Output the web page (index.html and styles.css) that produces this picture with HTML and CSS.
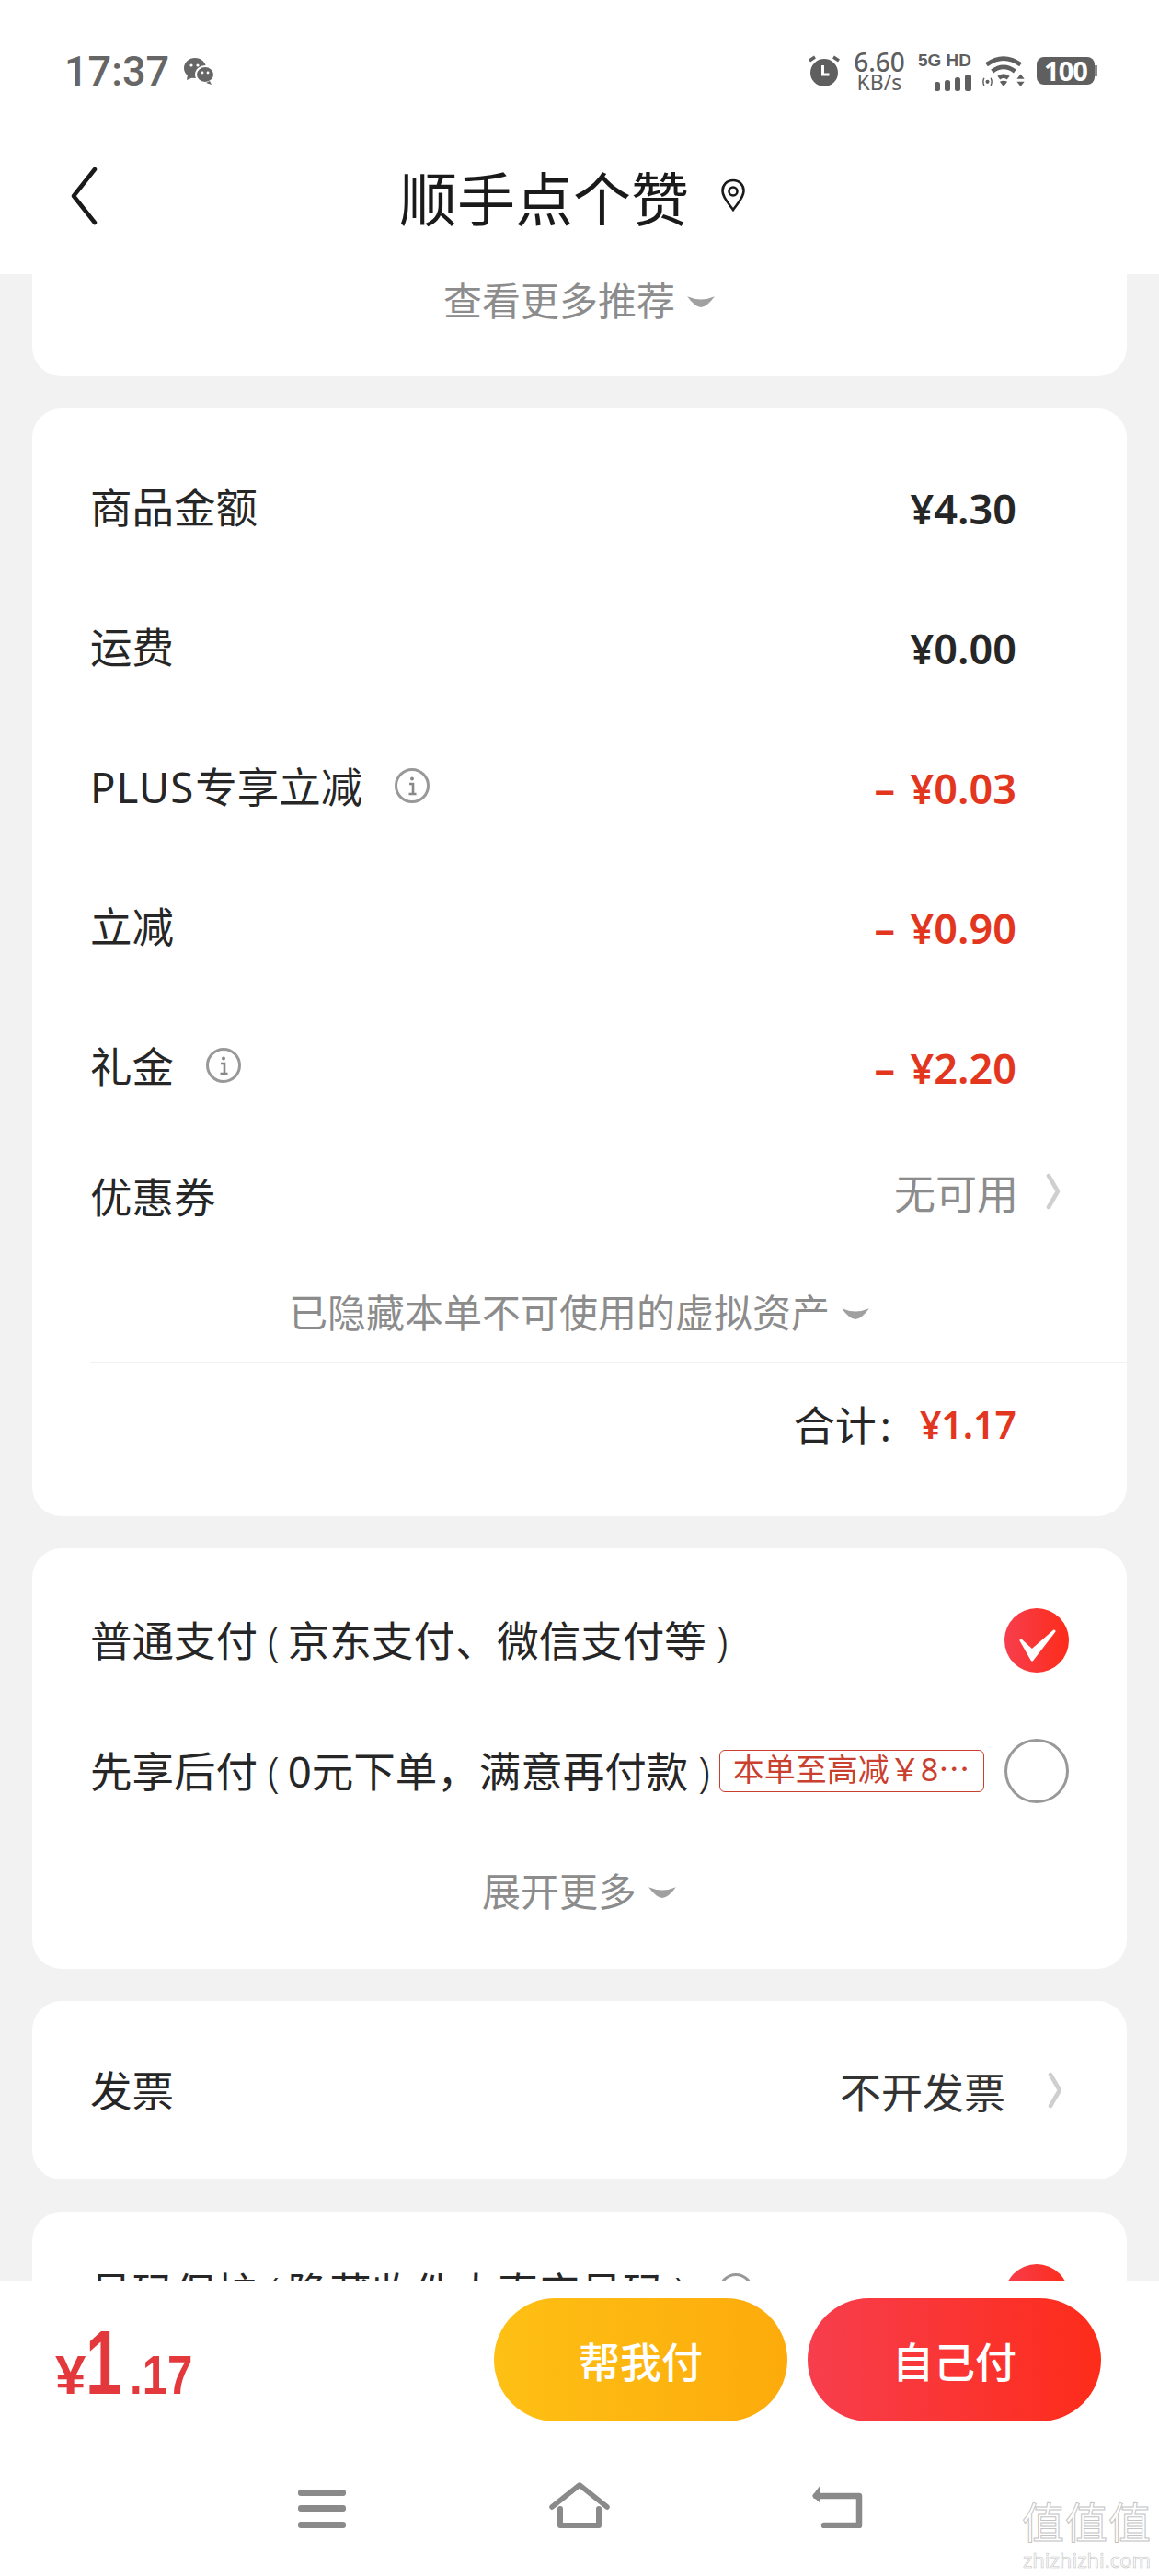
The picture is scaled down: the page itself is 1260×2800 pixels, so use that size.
FILE: index.html
```html
<!DOCTYPE html>
<html lang="zh-CN">
<head>
    <meta charset="UTF-8">
    <meta name="viewport" content="width=device-width, initial-scale=1.0">
    <title>订单结算</title>
    <link rel="stylesheet" href="styles.css">
</head>
<body>
    <svg class="defs" width="0" height="0">
        <symbol id="info" viewBox="0 0 40 40">
            <circle cx="20" cy="20" r="17.5" fill="none" stroke="#999" stroke-width="3"/>
            <circle cx="20" cy="12.5" r="2" fill="#888"/>
            <path d="M17 18h4v11M16.5 29h8" fill="none" stroke="#888" stroke-width="2.6"/>
        </symbol>
        <symbol id="down" viewBox="0 0 30 16">
            <path d="M1 3Q15 9 29 3Q21 14 15 14Q9 14 1 3Z" fill="#a0a0a0"/>
        </symbol>
        <symbol id="right" viewBox="0 0 16 40">
            <path d="M3 3l10 17l-10 17" fill="none" stroke="#cfcfcf" stroke-width="4.5" stroke-linecap="round" stroke-linejoin="round"/>
        </symbol>
    </svg>

    <div class="page">
        <header class="top">
            <div class="status">
                <div class="status-left">
                    <span class="time">17:37</span>
                    <svg class="wechat" viewBox="0 0 34 30">
                        <ellipse cx="13" cy="12" rx="12" ry="11" fill="#666"/>
                        <path d="M5 19l-1 6l7-3z" fill="#666"/>
                        <ellipse cx="24" cy="19" rx="10" ry="9" fill="#666" stroke="#fff" stroke-width="2"/>
                        <path d="M29 26l2 4l-6-2z" fill="#666"/>
                        <circle cx="9" cy="9" r="1.6" fill="#fff"/>
                        <circle cx="16" cy="9" r="1.6" fill="#fff"/>
                        <circle cx="21" cy="17" r="1.4" fill="#fff"/>
                        <circle cx="27" cy="17" r="1.4" fill="#fff"/>
                    </svg>
                </div>
                <div class="status-right">
                    <svg class="alarm" viewBox="0 0 34 34">
                        <circle cx="17" cy="19" r="15" fill="#5f5f5f"/>
                        <path d="M1 6l6-4M33 6l-6-4" stroke="#5f5f5f" stroke-width="3.4" fill="none"/>
                        <path d="M15.5 11v10h7" stroke="#fff" stroke-width="3" fill="none"/>
                    </svg>
                    <div class="speed"><span>6.60</span><span class="speed-unit">KB/s</span></div>
                    <div class="net">
                        <span class="net-label">5G HD</span>
                        <svg class="bars" viewBox="0 0 40 18">
                            <rect x="0" y="8" width="6" height="10" rx="2.5" fill="#5f5f5f"/>
                            <rect x="11" y="6" width="6" height="12" rx="2.5" fill="#5f5f5f"/>
                            <rect x="22" y="3" width="6" height="15" rx="2.5" fill="#5f5f5f"/>
                            <rect x="33" y="0" width="7" height="18" rx="2.5" fill="#5f5f5f"/>
                        </svg>
                    </div>
                    <svg class="wifi" viewBox="0 0 44 34">
                        <path d="M4 10q18-13 36 0M10 17q12-9 24 0M17 24q5-4 10 0" fill="none" stroke="#5f5f5f" stroke-width="4.6"/>
                        <path d="M22 33l-4-5q4-2 8 0z" fill="#5f5f5f"/>
                        <circle cx="5" cy="28" r="2" fill="#5f5f5f"/>
                        <path d="M1.500 24q-2 4 0 8M8.500 24q2 4 0 8" stroke="#5f5f5f" stroke-width="1.4" fill="none"/>
                        <path d="M40 20l4 5h-8zM36 28h8l-4 5z" fill="#5f5f5f"/>
                    </svg>
                    <div class="battery"><span class="battery-num">100</span><i class="battery-tip"></i></div>
                </div>
            </div>
            <div class="nav">
                <svg class="back" viewBox="0 0 30 64">
                    <path d="M27 3L4 32l23 29" fill="none" stroke="#1a1a1a" stroke-width="4.500" stroke-linecap="round" stroke-linejoin="round"/>
                </svg>
                <h1 class="shop">顺手点个赞</h1>
                <svg class="pin" viewBox="0 0 28 36">
                    <path d="M14 2C7 2 2.500 7 2.500 13.500C2.500 21 10 28 14 34C18 28 25.500 21 25.500 13.500C25.500 7 21 2 14 2Z" fill="none" stroke="#1a1a1a" stroke-width="2.600"/>
                    <circle cx="14" cy="14" r="4.500" fill="none" stroke="#1a1a1a" stroke-width="2.600"/>
                </svg>
            </div>
        </header>

        <main class="content">
            <section class="card card-first">
                <div class="more more-top">查看更多推荐<svg class="down"><use href="#down"/></svg></div>
            </section>

            <section class="card card-price">
                <div class="row"><span class="label">商品金额</span><span class="value">¥4.30</span></div>
                <div class="row"><span class="label">运费</span><span class="value">¥0.00</span></div>
                <div class="row"><span class="label"><span class="plus">PLUS</span>专享立减<svg class="info"><use href="#info"/></svg></span><span class="value value-red">– ¥0.03</span></div>
                <div class="row"><span class="label">立减</span><span class="value value-red">– ¥0.90</span></div>
                <div class="row"><span class="label">礼金<svg class="info"><use href="#info"/></svg></span><span class="value value-red">– ¥2.20</span></div>
                <div class="row row-coupon">
                    <span class="label">优惠券</span>
                    <span class="link-value">无可用<svg class="right"><use href="#right"/></svg></span>
                </div>
                <div class="more more-hidden">已隐藏本单不可使用的虚拟资产<svg class="down"><use href="#down"/></svg></div>
                <div class="total"><span class="total-label">合计<span class="colon">:</span></span><span class="total-num">¥1.17</span></div>
            </section>

            <section class="card card-pay">
                <div class="pay-row">
                    <span class="label">普通支付 <span class="paren-l">(</span>京东支付、微信支付等<span class="paren-r">)</span></span>
                    <svg class="radio" viewBox="0 0 70 70">
                        <defs>
                            <linearGradient id="redBtn" x1="0" x2="1" y1="0" y2="0">
                                <stop offset="0" stop-color="#f73e4d"/>
                                <stop offset="1" stop-color="#fd2c1a"/>
                            </linearGradient>
                        </defs>
                        <circle cx="35" cy="35" r="35" fill="url(#redBtn)"/>
                        <path d="M18 35l12 11l24-21l-24 31z" fill="#fff" stroke="#fff" stroke-width="3" stroke-linejoin="round"/>
                    </svg>
                </div>
                <div class="pay-row">
                    <span class="label">先享后付 <span class="paren-l">(</span>0元下单，满意再付款<span class="paren-r">)</span></span>
                    <span class="tag">本单至高减￥8⋯</span>
                    <i class="radio-off"></i>
                </div>
                <div class="more more-pay">展开更多<svg class="down"><use href="#down"/></svg></div>
            </section>

            <section class="card card-invoice">
                <span class="label">发票</span>
                <span class="link-value link-dark">不开发票<svg class="right"><use href="#right"/></svg></span>
            </section>

            <section class="card card-phone">
                <span class="label">号码保护 <span class="paren-l">(</span>隐藏收件人真实号码<span class="paren-r">)</span><svg class="info"><use href="#info"/></svg></span>
                <svg class="radio" viewBox="0 0 70 70"><circle cx="35" cy="35" r="35" fill="url(#redBtn)"/></svg>
            </section>
        </main>

        <footer class="bottom">
            <div class="pay-bar">
                <div class="price"><span class="price-sign">¥</span><span class="price-int">1</span><span class="price-dec">.17</span></div>
                <div class="btns">
                    <div class="btn btn-yellow">帮我付</div>
                    <div class="btn btn-red">自己付</div>
                </div>
            </div>
            <div class="sys-nav">
                <svg class="sys-menu" viewBox="0 0 52 42">
                    <rect width="52" height="7" rx="3" fill="#8a8a8a"/>
                    <rect y="17" width="52" height="7" rx="3" fill="#8a8a8a"/>
                    <rect y="35" width="52" height="7" rx="3" fill="#8a8a8a"/>
                </svg>
                <svg class="sys-home" viewBox="0 0 66 50">
                    <path d="M3 27L33 3l30 24" fill="none" stroke="#8a8a8a" stroke-width="5.500" stroke-linecap="round" stroke-linejoin="round"/>
                    <path d="M12 29v18h42V29" fill="none" stroke="#8a8a8a" stroke-width="6" stroke-linecap="round" stroke-linejoin="round"/>
                </svg>
                <svg class="sys-back" viewBox="0 0 56 48">
                    <path d="M5 13h47v32H14" fill="none" stroke="#8a8a8a" stroke-width="6.500" stroke-linecap="round" stroke-linejoin="round"/>
                    <path d="M1 13L10 1v20z" fill="#8a8a8a"/>
                </svg>
            </div>
            <div class="watermark"><span class="wm-big">值值值</span><span class="wm-small">zhizhizhi.com</span></div>
        </footer>
    </div>
</body>
</html>
```

FILE: styles.css
```css
* { box-sizing: border-box; }
html, body { margin: 0; padding: 0; }
body { font-family: "Noto Sans", "Noto Sans CJK SC", sans-serif; color: #262626; background: #f2f2f2; }
.defs { position: absolute; }
.page { width: 1260px; height: 2800px; display: flex; flex-direction: column; overflow: hidden; }

.top { height: 298px; flex: none; background: #fff; }
.status { height: 154px; padding: 0 70px; display: flex; justify-content: space-between; align-items: center; }
.status-left { display: flex; align-items: center; gap: 15px; }
.time { font-family: Roboto, sans-serif; font-size: 45px; color: #666; font-weight: 500; }
.wechat { width: 34px; height: 30px; }
.status-right { display: flex; align-items: center; }
.alarm { width: 34px; height: 34px; margin-right: 14px; }
.speed { display: flex; flex-direction: column; align-items: center; color: #5f5f5f; font-size: 28px; line-height: 25px; width: 58px; font-weight: 500; }
.speed-unit { font-size: 23px; line-height: 19px; font-weight: 400; }
.net { width: 60px; margin-left: 11px; display: flex; flex-direction: column; align-items: flex-end; }
.net-label { font-size: 19px; font-weight: 700; line-height: 20px; color: #5f5f5f; white-space: nowrap; font-family: "Liberation Sans", sans-serif; }
.bars { width: 40px; height: 18px; margin-top: 5px; }
.wifi { width: 46px; height: 35px; margin-left: 12px; }
.battery { margin-left: 13px; width: 63px; height: 30px; background: #5f5f5f; border-radius: 8px; display: flex; align-items: center; justify-content: center; position: relative; }
.battery-num { color: #fff; font-size: 29px; font-weight: 700; line-height: 30px; letter-spacing: -1px; }
.battery-tip { position: absolute; right: -3px; top: 9px; width: 3px; height: 12px; background: #8a8a8a; }

.nav { height: 116px; display: flex; align-items: center; justify-content: center; position: relative; }
.back { position: absolute; left: 76px; top: 25px; width: 30px; height: 68px; }
.shop { margin: 0 0 0 -15px; font-size: 63px; font-weight: 400; color: #1a1a1a; }
.pin { width: 28px; height: 36px; margin-left: 34px; }

.content { flex: 1; min-height: 0; overflow: hidden; padding: 0 35px; }
.card { background: #fff; border-radius: 32px; margin-bottom: 35px; }
.label { font-size: 45.5px; line-height: 60px; display: flex; align-items: center; white-space: nowrap; }
.plus { letter-spacing: 1px; margin-right: 1px; }
.paren-l { margin: 0 9px 0 11px; font-weight: 300; }
.paren-r { margin-left: 11px; font-weight: 300; }
.info { width: 40px; height: 40px; margin-left: 34px; margin-top: -2px; }
.down { width: 32px; height: 17px; margin-left: 12px; }
.right { width: 16px; height: 40px; margin-left: 30px; }

.more { display: flex; justify-content: center; align-items: center; color: #8c8c8c; font-size: 42px; line-height: 60px; }
.card-first { height: 111px; border-radius: 0 0 32px 32px; }
.more-top { height: 58px; }

.card-price { padding: 27px 0 35px 63px; }
.row { height: 152px; padding-right: 120px; display: flex; justify-content: space-between; align-items: center; }
.row .label { margin-top: 7px; }
.value { font-size: 45px; color: #262626; margin-top: 10px; font-weight: 600; }
.value-red { color: #e2361f; word-spacing: 5px; }
.row-coupon { height: 132px; padding-right: 72px; }
.link-value { display: flex; align-items: center; color: #8c8c8c; font-size: 45px; }
.row-coupon .link-value { margin-top: -4px; }
.link-dark { color: #333; }
.link-dark .right { margin-left: 46px; }
.more-hidden { height: 117px; padding-top: 11px; margin-left: -63px; }
.total { height: 133px; border-top: 2px solid #f2f2f2; padding-right: 120px; display: flex; justify-content: flex-end; align-items: center; }
.total-label { font-size: 45px; margin-right: 28px; }
.colon { margin: 0 3px 0 4px; }
.total-num { font-size: 41px; font-weight: 600; color: #e2361f; }

.card-pay { height: 457px; padding: 29px 63px 0; }
.pay-row { height: 142px; display: flex; align-items: center; }
.pay-row .label { flex: none; }
.radio { width: 70px; height: 70px; margin-left: auto; flex: none; }
.radio-off { width: 70px; height: 70px; margin-left: auto; border: 3px solid #999; border-radius: 50%; flex: none; }
.tag { margin-left: 10px; width: 288px; height: 46px; padding-left: 14px; border: 1.5px solid #c9402f; border-radius: 6px; color: #c9402f; font-size: 34px; line-height: 41px; white-space: nowrap; overflow: hidden; }
.more-pay { height: 60px; margin: 30px -63px 0; }

.card-invoice { height: 194px; padding: 0 70px 0 63px; display: flex; justify-content: space-between; align-items: center; }
.card-phone { height: 200px; padding: 57px 63px 0; display: flex; justify-content: space-between; align-items: flex-start; }

.bottom { height: 321px; flex: none; background: #fff; position: relative; }
.pay-bar { height: 172px; padding: 19px 63px 0 60px; display: flex; justify-content: space-between; }
.price { color: #e4393c; display: flex; align-items: baseline; height: 134px; margin-top: 3px; font-family: "Liberation Sans", sans-serif; font-weight: 700; line-height: 134px; }
.price-sign { font-size: 60px; }
.price-int { font-size: 98px; margin-right: -7px; display: inline-block; transform: scaleX(.72); transform-origin: left; }
.price-dec { font-size: 60px; display: inline-block; transform: scaleX(.82); transform-origin: left; }
.btns { display: flex; gap: 22px; }
.btn { width: 319px; height: 134px; border-radius: 67px; color: #fff; font-size: 45px; font-weight: 500; display: flex; align-items: center; justify-content: center; }
.btn-yellow { background: linear-gradient(90deg, #fec014, #fdab0c); }
.btn-red { background: linear-gradient(90deg, #f73e4d, #fd2c1a); }

.sys-nav { height: 149px; padding-left: 324px; display: flex; align-items: flex-start; }
.sys-menu { width: 52px; height: 42px; margin-top: 55px; }
.sys-home { width: 66px; height: 50px; margin-top: 47px; margin-left: 221px; }
.sys-back { width: 56px; height: 48px; margin-top: 49px; margin-left: 219px; }

.watermark { position: absolute; right: 8px; bottom: 4px; display: flex; flex-direction: column; align-items: center; color: #fff; -webkit-text-stroke: 1px #c4c4c4; }
.wm-big { font-size: 46px; line-height: 54px; letter-spacing: 1px; }
.wm-small { font-size: 22px; line-height: 28px; -webkit-text-stroke: 0.6px #c4c4c4; }
```
